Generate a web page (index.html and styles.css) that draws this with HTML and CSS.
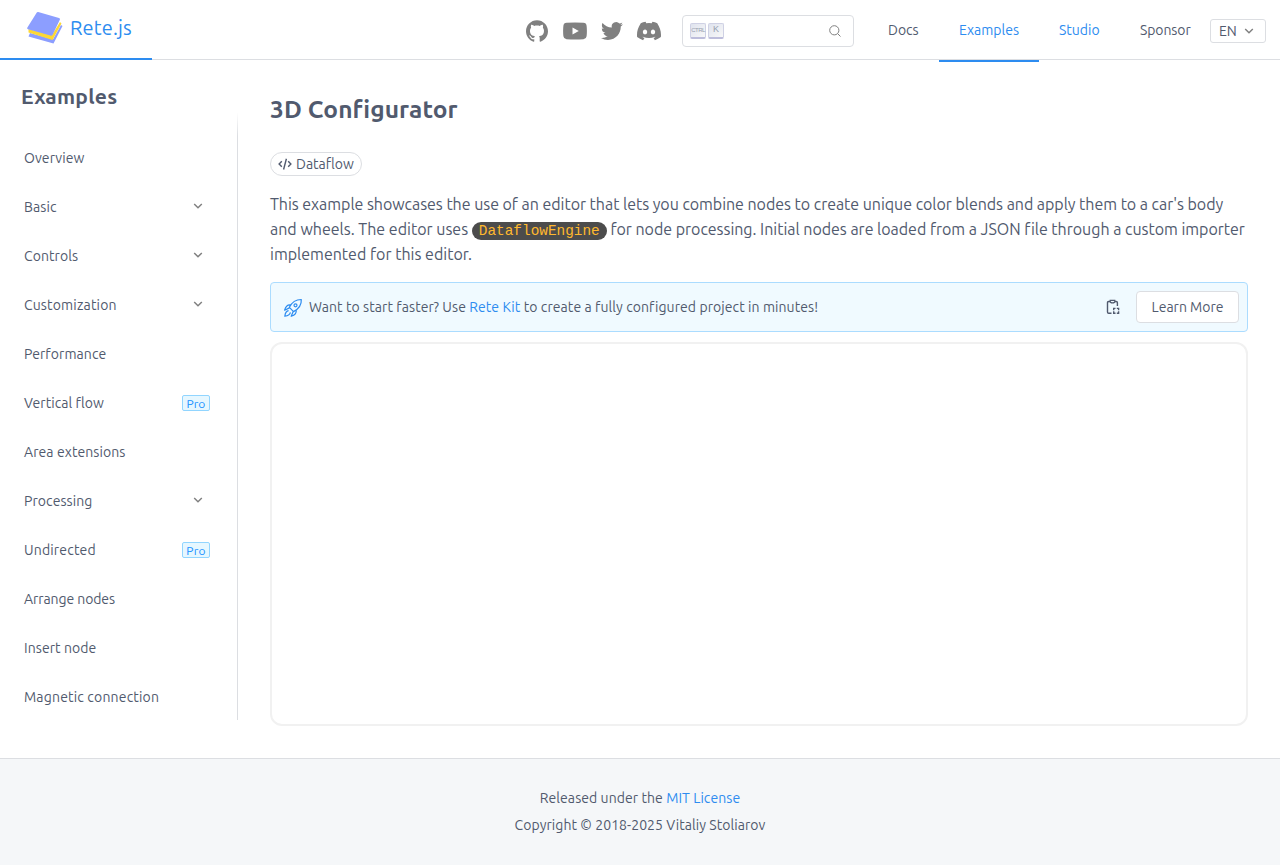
FILE: index.html
```
<!DOCTYPE html>
<html lang="en">
<head>
<meta charset="utf-8">
<title>3D Configurator - Rete.js</title>
<link rel="stylesheet" href="styles.css">
</head>
<body>
<svg class="defs" aria-hidden="true">
  <symbol id="chevron" viewBox="0 0 10 6"><path d="M1.2 1 5 4.7 8.8 1" fill="none" stroke="#808080" stroke-width="1.5"/></symbol>
</svg>
<header class="header">
  <a class="brand">
    <svg class="logo" width="36" height="34" viewBox="0 0 36 34">
      <path d="M3 22 26 28.200 34 14 35.500 15 26.500 32.500 1.500 25.500Z" fill="#8c9eff"/>
      <path d="M1.500 18 25 24 33 11 34.500 12.500 25.500 29 1.500 21.500Z" fill="#fdd835"/>
      <path d="M9.800 1.500Q10.200.7 11.200 1L32 7Q33.500 7.500 32.700 9L25.800 23.400Q25 25 23.400 24.600L1 18.300Q-.4 17.800.4 16.400Z" fill="#8c9eff"/>
    </svg>
    <span>Rete.js</span>
  </a>
  <div class="social">
    <svg width="22" height="22" viewBox="0 0 24 24"><path d="M12 .297c-6.630 0-12 5.373-12 12 0 5.303 3.438 9.800 8.205 11.385.6.113.82-.258.82-.577 0-.285-.010-1.040-.015-2.040-3.338.724-4.042-1.610-4.042-1.610C4.422 18.070 3.633 17.700 3.633 17.700c-1.087-.744.084-.729.084-.729 1.205.084 1.838 1.236 1.838 1.236 1.070 1.835 2.809 1.305 3.495.998.108-.776.417-1.305.76-1.605-2.665-.3-5.466-1.332-5.466-5.930 0-1.310.465-2.380 1.235-3.220-.135-.303-.54-1.523.105-3.176 0 0 1.005-.322 3.300 1.230.96-.267 1.980-.399 3-.405 1.020.006 2.040.138 3 .405 2.280-1.552 3.285-1.230 3.285-1.230.645 1.653.24 2.873.12 3.176.765.84 1.230 1.910 1.230 3.220 0 4.610-2.805 5.625-5.475 5.920.42.36.81 1.096.81 2.220 0 1.606-.015 2.896-.015 3.286 0 .315.21.69.825.57C20.565 22.092 24 17.592 24 12.297c0-6.627-5.373-12-12-12"/></svg>
    <svg width="24" height="18" viewBox="0 0 24 18"><path fill-rule="evenodd" d="M3.500.7Q12 .1 20.500.7 23.300.9 23.600 3.800 24.200 9 23.600 14.200 23.300 16.900 20.500 17.200 12 17.800 3.500 17.200.7 16.900.4 14.200-.2 9 .4 3.800.7.9 3.500.7ZM9.500 5.400v7.200L15.800 9Z"/></svg>
    <svg width="22" height="22" viewBox="0 0 24 24"><path d="M23.953 4.570a10 10 0 01-2.825.775 4.958 4.958 0 002.163-2.723c-.951.555-2.005.959-3.127 1.184a4.920 4.920 0 00-8.384 4.482C7.690 8.095 4.067 6.130 1.640 3.162a4.822 4.822 0 00-.666 2.475c0 1.710.87 3.213 2.188 4.096a4.904 4.904 0 01-2.228-.616v.06a4.923 4.923 0 003.946 4.827 4.996 4.996 0 01-2.212.085 4.936 4.936 0 004.604 3.417 9.867 9.867 0 01-6.102 2.105c-.39 0-.779-.023-1.170-.067a13.995 13.995 0 007.557 2.209c9.053 0 13.998-7.496 13.998-13.985 0-.21 0-.42-.015-.63A9.935 9.935 0 0024 4.590z"/></svg>
    <svg width="24" height="24" viewBox="0 0 24 24"><path d="M20.317 4.370a19.791 19.791 0 0 0-4.885-1.515.074.074 0 0 0-.079.037c-.21.375-.444.864-.608 1.250a18.270 18.270 0 0 0-5.487 0 12.640 12.640 0 0 0-.617-1.250.077.077 0 0 0-.079-.037A19.736 19.736 0 0 0 3.677 4.370a.07.07 0 0 0-.032.027C.533 9.046-.32 13.580.099 18.058a.082.082 0 0 0 .031.056 19.900 19.900 0 0 0 5.993 3.030.078.078 0 0 0 .084-.028 14.090 14.090 0 0 0 1.226-1.994.076.076 0 0 0-.041-.106 13.107 13.107 0 0 1-1.872-.892.077.077 0 0 1-.008-.128 10.200 10.200 0 0 0 .372-.292.074.074 0 0 1 .077-.010c3.928 1.793 8.180 1.793 12.062 0a.074.074 0 0 1 .078.010c.12.098.246.198.373.292a.077.077 0 0 1-.006.127 12.299 12.299 0 0 1-1.873.892.077.077 0 0 0-.041.107c.36.698.772 1.362 1.225 1.993a.076.076 0 0 0 .084.028 19.839 19.839 0 0 0 6.002-3.030.077.077 0 0 0 .032-.054c.5-5.177-.838-9.674-3.549-13.660a.061.061 0 0 0-.031-.030zM8.020 15.330c-1.183 0-2.157-1.085-2.157-2.419 0-1.333.956-2.419 2.157-2.419 1.210 0 2.176 1.096 2.157 2.420 0 1.333-.956 2.418-2.157 2.418zm7.975 0c-1.183 0-2.157-1.085-2.157-2.419 0-1.333.955-2.419 2.157-2.419 1.210 0 2.176 1.096 2.157 2.420 0 1.333-.946 2.418-2.157 2.418z"/></svg>
  </div>
  <div class="search">
    <kbd class="ctrl">CTRL</kbd><kbd>K</kbd>
    <svg class="lens" width="12" height="12" viewBox="0 0 12 12"><circle cx="5.300" cy="5.300" r="4.600"/><path d="M8.700 8.700 11.500 11.500"/></svg>
  </div>
  <nav class="nav">
    <a class="docs">Docs</a>
    <a class="examples active">Examples</a>
    <a class="studio">Studio</a>
    <a class="sponsor">Sponsor</a>
  </nav>
  <button class="lang">EN <svg width="10" height="6"><use href="#chevron"/></svg></button>
</header>
<div class="layout">
  <aside class="sidebar">
    <h2>Examples</h2>
    <ul class="menu">
      <li>Overview</li>
      <li>Basic<svg width="10" height="6"><use href="#chevron"/></svg></li>
      <li>Controls<svg width="10" height="6"><use href="#chevron"/></svg></li>
      <li class="wide">Customization<svg width="10" height="6"><use href="#chevron"/></svg></li>
      <li>Performance</li>
      <li>Vertical flow<span class="pro">Pro</span></li>
      <li>Area extensions</li>
      <li>Processing<svg width="10" height="6"><use href="#chevron"/></svg></li>
      <li class="wide">Undirected<span class="pro">Pro</span></li>
      <li class="narrow">Arrange nodes</li>
      <li>Insert node</li>
      <li class="wide">Magnetic connection</li>
    </ul>
  </aside>
  <main class="content">
    <h1>3D Configurator</h1>
    <div class="tag"><svg width="14" height="12" viewBox="0 0 14 12"><path d="M3.800 3.200 1.100 6 3.800 8.800M10.200 3.200 12.900 6 10.200 8.800M8.400.8 5.600 11.500"/></svg>Dataflow</div>
    <p class="intro"><span class="lead">This example showcases the use of an editor that lets you combine nodes to create unique color blends and apply them to a car's body</span> and wheels. The editor uses <code>DataflowEngine</code> <span class="rest">for node processing. Initial nodes are loaded from a JSON file through a custom importer</span> implemented for this editor.</p>
    <div class="banner">
      <svg class="rocket" width="20" height="20" viewBox="0 0 20 20"><path d="M18.300 1.500C12.500 1.500 9 4 6.400 9.300L10.500 13.600C15.700 10.900 18.700 7.400 18.300 1.500ZM7.800 6.900C4.400 6.300 2.600 8.600 1.600 12.200L6.400 9.900M13.200 11.800C13.700 15.200 11.700 17.200 8.200 18.300L10.200 13.500M5.600 12.700C2.700 13 2.200 15 1.800 18.200 4.900 17.700 7 17.200 7.400 14.300"/><circle cx="12.500" cy="7.300" r="1.500"/></svg>
      <p>Want to start faster? Use <a>Rete Kit</a> to create a fully configured project in minutes!</p>
      <svg class="clip" width="14" height="16" viewBox="0 0 14 16"><path d="M4 2.500H2.700Q1.500 2.500 1.500 3.700V13Q1.500 14.200 2.700 14.200H5.500M9 2.500H10.200Q11.400 2.500 11.400 3.700V7"/><path d="M4.200 1.300H8.800V2.500Q8.800 3.900 6.500 3.900T4.200 2.500Z" stroke-width="1.200"/><path d="M7.700 11.300V9.400H9.500M10.800 9.400H12.600V11.300M12.600 12.300V14.200H10.800M9.500 14.200H7.700V12.300"/></svg>
      <button class="learn">Learn More</button>
    </div>
    <div class="demo"></div>
  </main>
</div>
<footer class="footer">
  <p>Released under the <a>MIT License</a></p>
  <p>Copyright © 2018-2025 Vitaliy Stoliarov</p>
</footer>
</body>
</html>
```
FILE: styles.css
```
* { box-sizing: border-box; }
body {
  margin: 0;
  color: #515a6e;
  background: #fff;
  font: 14px/20px Ubuntu, "Noto Sans", sans-serif;
}
h1, h2, p, ul { margin: 0; padding: 0; }
a { color: #2d8cf0; }
svg { display: block; flex: none; }
button { font: inherit; color: inherit; background: #fff; border: 1px solid #dcdee2; border-radius: 3px; padding: 0; }
.defs { position: absolute; width: 0; height: 0; }

.header { display: flex; height: 60px; border-bottom: 1px solid #dcdee2; }
.brand { display: flex; width: 152px; height: 60px; padding: 11px 0 0 27px; gap: 7px; border-bottom: 2px solid #2d8cf0; font-size: 20px; line-height: 33px; letter-spacing: .15px; }
.social { display: flex; align-items: center; width: 136px; margin-left: 374px; padding-top: 2px; fill: #808080; }
.social svg:nth-child(2) { margin-left: 15px; }
.social svg:nth-child(3) { margin-left: 14px; }
.social svg:nth-child(4) { margin-left: 14px; }
.search { display: flex; width: 172px; height: 32px; margin: 15px 0 0 20px; padding: 7px 12px 0 7px; border: 1px solid #dcdee2; border-radius: 4px; }
kbd { width: 16px; height: 16px; margin-right: 2px; border: 1px solid #cfd1e4; border-bottom: 2px solid #bdbddb; border-radius: 2px; background: linear-gradient(135deg, #dfe3ee, #f8f8f8); color: #969faf; font: 9px/11px "Liberation Sans", sans-serif; text-align: center; }
.ctrl { font-size: 6px; line-height: 12px; letter-spacing: -.6px; }
.lens { margin: 2px 0 0 auto; fill: none; stroke: #808080; }
.nav { display: flex; margin-left: 14px; }
.nav a { height: 62px; padding: 20px 0 0 20px; color: #515a6e; }
.nav .docs { width: 71px; }
.nav .examples { width: 100px; }
.nav .studio { width: 81px; color: #2d8cf0; }
.nav .sponsor { width: 90px; letter-spacing: -.1px; }
.nav .active { color: #2d8cf0; border-bottom: 2px solid #2d8cf0; }
.lang { display: flex; align-items: center; gap: 7px; width: 56px; height: 24px; margin-top: 19px; padding-left: 8px; }

.layout { display: flex; height: 698px; }
.sidebar { width: 238px; height: 660px; background: linear-gradient(transparent 52px, #dcdee2 76px) right / 1px 100% no-repeat; }
h2 { padding: 21px 0 0 21px; font-size: 21px; line-height: 31px; letter-spacing: .25px; }
.menu { padding: 21px 28px 0 24px; list-style: none; }
.menu li { display: flex; align-items: center; justify-content: space-between; height: 49px; letter-spacing: .08px; }
.menu .wide { letter-spacing: .18px; }
.menu .narrow { letter-spacing: -.08px; }
.menu svg { margin: 0 7px 1px 0; }
.pro { width: 28px; height: 16px; border: 1px solid #91d5ff; border-radius: 2px; background: #e6f7ff; color: #1890ff; font-size: 12px; line-height: 15px; text-align: center; }

.content { width: 978px; margin-left: 32px; padding-top: 30px; }
h1 { font-size: 24.5px; line-height: 38px; letter-spacing: .1px; }
.tag { display: flex; align-items: center; width: 92px; height: 24px; margin-top: 24px; padding-left: 7px; gap: 4px; border: 1px solid #dcdee2; border-radius: 12px; }
.tag svg { fill: none; stroke: #515a6e; stroke-width: 1.4; }
.intro { height: 91px; padding-top: 16px; font-size: 16px; line-height: 25px; }
.lead { letter-spacing: -.04px; }
.rest { letter-spacing: -.025px; }
code { padding: 1px 7px; border-radius: 9px; background: #4c4c4c; color: #ffb82e; font: 14.4px/18px "Liberation Mono", monospace; }
.banner { display: flex; align-items: center; height: 50px; margin-top: 15px; padding: 0 8px 0 12px; border: 1px solid #abdcff; border-radius: 4px; background: #f0faff; letter-spacing: .08px; }
.rocket { margin: 1px 6px 0 0; fill: none; stroke: #2d8cf0; stroke-width: 1.200; stroke-linejoin: round; }
.clip { margin: 0 16px 0 auto; fill: none; stroke: #515a6e; stroke-width: 1.400; }
.learn { width: 103px; height: 32px; border-radius: 4px; letter-spacing: 0; }
.demo { height: 384px; margin-top: 10px; border: 2px solid #f1f1f1; border-radius: 12px; }

.footer { height: 107px; padding-top: 26px; border-top: 1px solid #dcdee2; background: #f5f7f9; line-height: 27px; text-align: center; letter-spacing: .07px; }
```
